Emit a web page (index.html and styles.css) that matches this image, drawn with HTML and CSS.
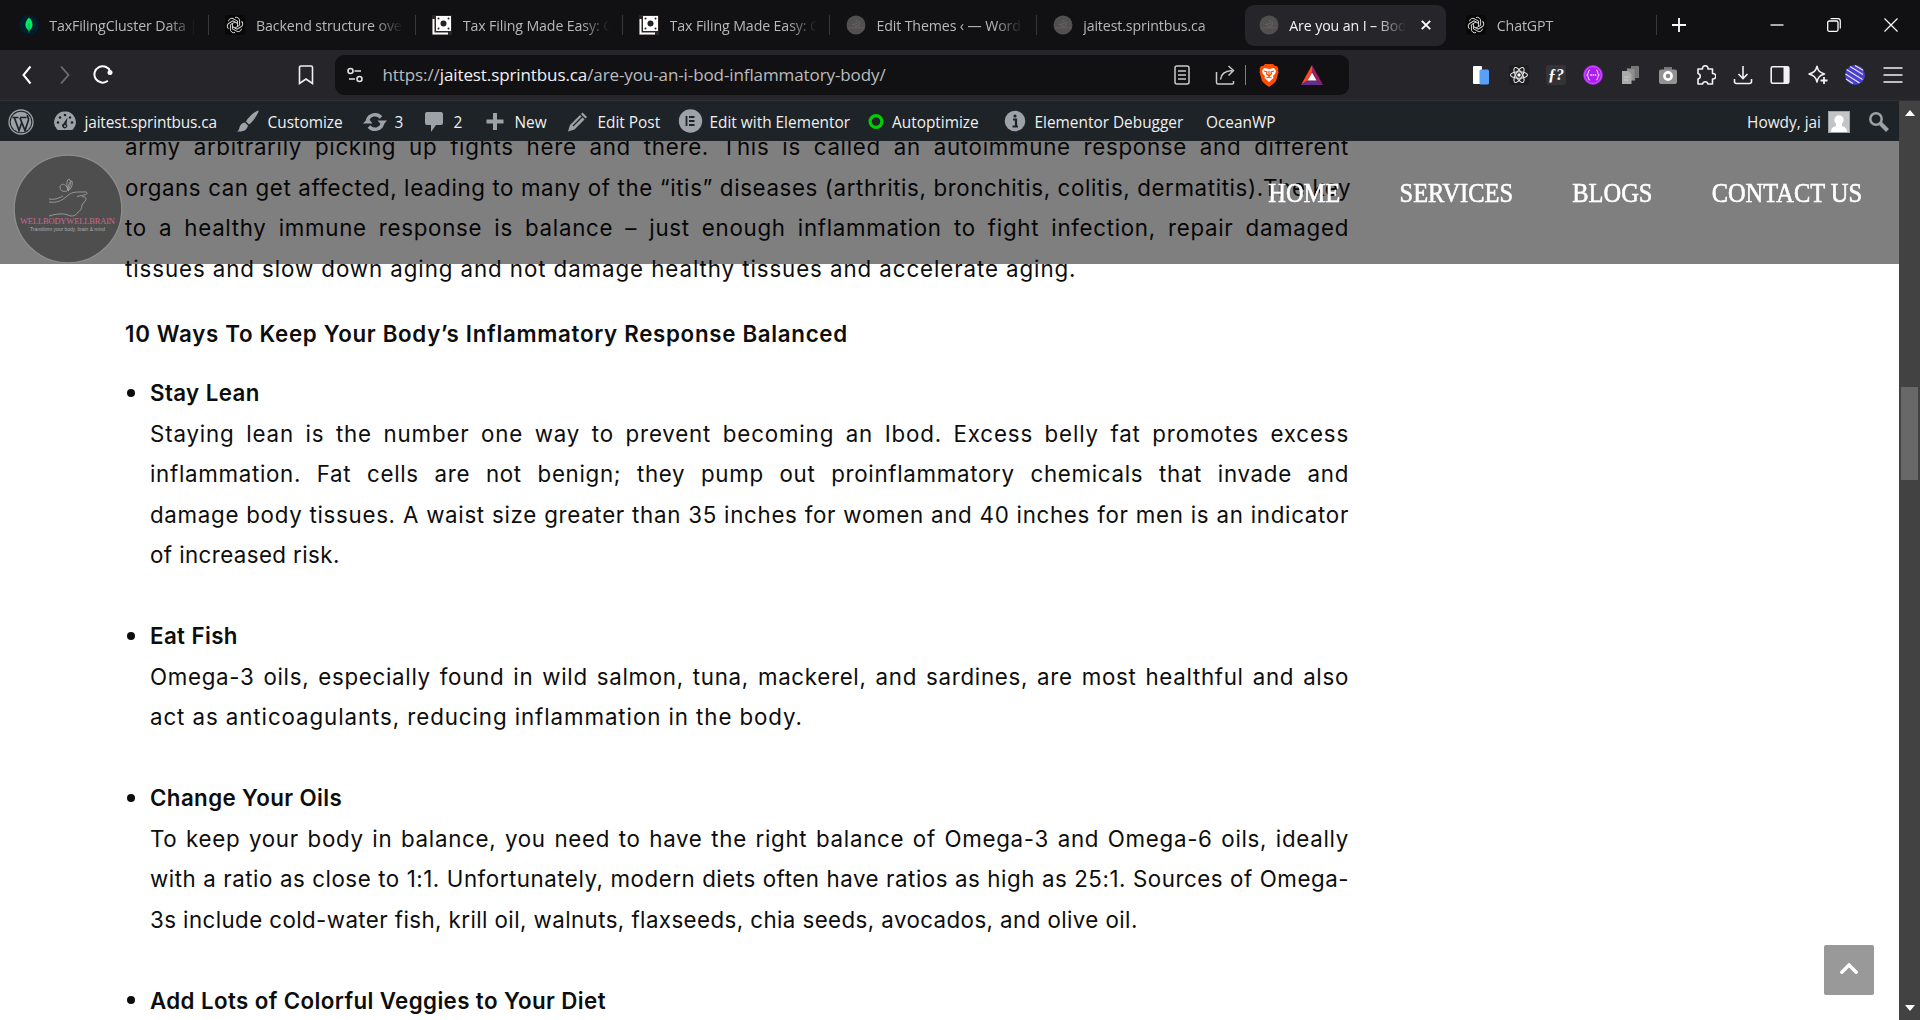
FILE: index.html
```html
<!DOCTYPE html>
<html lang="en">
<head>
<meta charset="utf-8">
<title>Are you an I – Bod?</title>
<link rel="stylesheet" href="styles.css">
</head>
<body>
<svg class="defs" aria-hidden="true">
  <symbol id="gpt" viewBox="0 0 20 20"><rect width="20" height="20" rx="3" fill="#080808"/><g fill="none" stroke="#d8d8d8" stroke-width="1"><g id="petal"><path d="M10 2.500a3.400 3.400 0 0 1 4.600 3.600v4.200L10 13"/></g><use href="#petal" transform="rotate(60 10 10)"/><use href="#petal" transform="rotate(120 10 10)"/><use href="#petal" transform="rotate(180 10 10)"/><use href="#petal" transform="rotate(240 10 10)"/><use href="#petal" transform="rotate(300 10 10)"/></g></symbol>
  <symbol id="money" viewBox="0 0 20 20"><rect width="20" height="20" fill="#2a2523"/><path d="M4 1h15v15H4z" fill="#fff"/><path d="M1.500 4v14.500H16" fill="none" stroke="#fff" stroke-width="2"/><circle cx="11.500" cy="8.500" r="3" fill="#222"/><g fill="#222"><circle cx="6.500" cy="3.500" r="1"/><circle cx="16.500" cy="3.500" r="1"/><circle cx="6.500" cy="13.500" r="1"/><circle cx="16.500" cy="13.500" r="1"/></g></symbol>
  <symbol id="well" viewBox="0 0 20 20"><circle cx="10" cy="10" r="9.500" fill="#505050"/><path d="M6 9.500l3-.5 3.500-1.500 1.500.5-1.500 3H8M10 6.500l.5-1.500 1 1" fill="none" stroke="#6c6c6c" stroke-width=".7"/><path d="M2 12.800h16" stroke="#75555c" stroke-width="1"/></symbol>
</svg>

<header class="tabs">
  <div class="tab"><svg class="fav" viewBox="0 0 20 20"><circle cx="10" cy="10" r="10" fill="#001e2b"/><path d="M10 2.500c5 5 4.500 10 0 13.500-4.500-3.500-5-8.500 0-13.500z" fill="#00ed64"/><path d="M10 8v9.500" stroke="#00a94a" stroke-width="1"/></svg><span class="tab-title">TaxFilingCluster Data |</span></div>
  <div class="tab"><svg class="fav"><use href="#gpt"/></svg><span class="tab-title">Backend structure over</span></div>
  <div class="tab"><svg class="fav"><use href="#money"/></svg><span class="tab-title">Tax Filing Made Easy: G</span></div>
  <div class="tab"><svg class="fav"><use href="#money"/></svg><span class="tab-title">Tax Filing Made Easy: G</span></div>
  <div class="tab"><svg class="fav"><use href="#well"/></svg><span class="tab-title">Edit Themes ‹ — Word</span></div>
  <div class="tab plain"><svg class="fav"><use href="#well"/></svg><span class="tab-title">jaitest.sprintbus.ca</span></div>
  <div class="tab active"><svg class="fav"><use href="#well"/></svg><span class="tab-title">Are you an I – Bod</span><svg class="tab-close" viewBox="0 0 10 10"><path d="M.8.8l8.400 8.400M9.200.8L.8 9.200" stroke="#fff" stroke-width="1.900"/></svg></div>
  <div class="tab"><svg class="fav"><use href="#gpt"/></svg><span class="tab-title">ChatGPT</span></div>
  <svg class="plus" viewBox="0 0 14 14"><path d="M7 0v14M0 7h14" stroke="#fff" stroke-width="1.800"/></svg>
  <div class="window">
    <svg viewBox="0 0 14 14"><path d="M.5 7h13" stroke="#fff" stroke-width="1.300"/></svg>
    <svg viewBox="0 0 14 14"><path d="M3.500.7H11a2.300 2.300 0 0 1 2.300 2.300v7.500" fill="none" stroke="#fff" stroke-width="1.200"/><rect x=".7" y="3" width="10.300" height="10.300" rx="1.500" fill="none" stroke="#fff" stroke-width="1.300"/></svg>
    <svg viewBox="0 0 14 14"><path d="M.5.5l13 13M13.500.5l-13 13" stroke="#fff" stroke-width="1.200"/></svg>
  </div>
</header>

<div class="toolbar">
  <div class="history">
    <svg viewBox="0 0 20 20"><path d="M13.500 1.500L6.500 10l7 8.500" stroke="#fff" stroke-width="2"/></svg>
    <svg viewBox="0 0 20 20"><path d="M6 1.500l7.500 8.500L6 18.500" stroke="#6f6e76" stroke-width="1.800"/></svg>
    <svg viewBox="0 0 20 20"><path d="M14.800 15.800A8.200 8.200 0 1 1 17.300 6.500" stroke="#fff" stroke-width="2"/><circle cx="17" cy="7.500" r="2.500" fill="#fff"/></svg>
  </div>
  <svg class="bookmark" viewBox="0 0 16 20"><path d="M1.500 2.500a1.500 1.500 0 0 1 1.500-1.500h10a1.500 1.500 0 0 1 1.500 1.500v16L8 14l-6.500 4.500z" fill="none" stroke="#f0f0f2" stroke-width="1.600"/></svg>
  <div class="address">
    <svg class="tune" viewBox="0 0 16 16"><g fill="none" stroke="#e2e2e4" stroke-width="1.600"><circle cx="3.500" cy="4" r="2.500"/><path d="M7.500 4H14M2 12h6"/><circle cx="12.500" cy="12" r="2.500"/></g></svg>
    <span class="url">https://<b>jaitest.sprintbus.ca</b>/are-you-an-i-bod-inflammatory-body/</span>
    <svg class="reader" viewBox="0 0 16 20"><rect x="1" y="1" width="14" height="18" rx="2"/><path d="M4 6h8M4 10h8M4 14h8"/></svg>
    <svg class="share" viewBox="0 0 20 20"><path d="M1.500 7v10.500a1.500 1.500 0 0 0 1.500 1.500h14.500a1 1 0 0 0 1-1v-2"/><path d="M5.500 14.500C6 9 9.500 6 17 5.500M13.500 1l5 4.500-5 5"/></svg>
    <i class="divider"></i>
    <svg class="brave" viewBox="0 0 20 23"><path d="M6 0h8l2 2h2l1.500 3-.5 1 .5 2-2.500 9-3 3-4 3-4-3-3-3L.5 8 1 6 .5 5 2 2h2z" fill="#ff4d00"/><path d="M5 4l5 1 5-1 2 3-1 3-2 2 .5 2L10 18l-4.500-4 .5-2-2-2-1-3z" fill="#fff"/><path d="M5 7l3 1-.5 2L10 12l2.500-2-.5-2 3-1M7.500 14l2.500-1 2.500 1M10 7v5" fill="none" stroke="#ff4d00" stroke-width="1.200"/></svg>
    <svg class="bat" viewBox="0 0 22 20"><path d="M11 0v7l-4.500 8.500L0 20z" fill="#ff4724"/><path d="M11 0l11 20-6.500-4.500L11 7z" fill="#9e1f63"/><path d="M0 20l6.500-4.500h9L22 20z" fill="#662d91"/><path d="M11 7.500l4.500 8h-9z" fill="#fff"/></svg>
  </div>
  <div class="extensions">
    <svg viewBox="0 0 20 20"><rect x="2" y="1" width="9" height="18" rx="1" fill="#fff"/><rect x="8.500" y="4.500" width="9.500" height="15" rx="1.500" fill="#58a0fa"/></svg>
    <svg viewBox="0 0 20 20"><rect width="20" height="20" rx="3" fill="#1e1e20"/><g fill="none" stroke="#e6e6e6" stroke-width="1.100"><ellipse cx="10" cy="10" rx="8.500" ry="3.300"/><ellipse cx="10" cy="10" rx="8.500" ry="3.300" transform="rotate(60 10 10)"/><ellipse cx="10" cy="10" rx="8.500" ry="3.300" transform="rotate(120 10 10)"/></g><circle cx="10" cy="10" r="1.700" fill="#fff"/></svg>
    <span class="ext-f">ƒ?</span>
    <svg viewBox="0 0 20 20"><circle cx="10" cy="10" r="9.900" fill="#ad1df0"/><circle cx="10" cy="10" r="8.400" fill="none" stroke="#d070f8" stroke-width=".8"/><path d="M7 5C4.500 5 6 9 4 10c2 1 .5 5 3 5M13 5c2.500 0 1 4 3 5-2 1-.5 5-3 5" fill="none" stroke="#ecc4fc" stroke-width="1.100"/><path d="M7.300 10h1.400M9.600 10H11M11.800 10h1.400" stroke="#fff" stroke-width="1.500"/></svg>
    <svg viewBox="0 0 20 20"><path d="M10 1h8v12h-8z" fill="#777"/><path d="M6 3.500h8v12H6z" fill="#8f8f8f" stroke="#666" stroke-width=".5"/><path d="M1 6h6l3.500 3v10H1z" fill="#aaa"/><path d="M3 12h5M3 15h4" stroke="#c8c8c8" stroke-width="1"/></svg>
    <svg viewBox="0 0 20 20"><path d="M6 2h8v4H6z" fill="#777"/><rect x="1" y="4.500" width="18" height="14.500" rx="2" fill="#929292"/><circle cx="10" cy="11" r="3.600" fill="#888" stroke="#fff" stroke-width="2.600"/></svg>
    <svg viewBox="0 0 20 20"><path d="M2 4h4.500a2.800 2.800 0 1 1 5.500 0h4.500v4.500a2.800 2.800 0 1 1 0 5.500v5H12a2.800 2.800 0 0 0-5.500 0H2v-5a2.800 2.800 0 0 0 0-5.500z" fill="none" stroke="#f2f2f4" stroke-width="1.600" stroke-linejoin="round"/></svg>
    <svg viewBox="0 0 20 20"><path d="M10 1v12M5.500 9l4.500 4.500L14.500 9M1.500 14v2.500a2 2 0 0 0 2 2h13a2 2 0 0 0 2-2V14" fill="none" stroke="#f2f2f4" stroke-width="1.600"/></svg>
    <svg viewBox="0 0 20 20"><rect x="1.200" y="1.800" width="17.600" height="16.400" rx="1.500" fill="none" stroke="#f2f2f4" stroke-width="1.600"/><path d="M13.500 2H19v16h-5.500z" fill="#f2f2f4"/></svg>
    <svg viewBox="0 0 20 20"><path d="M9 1.200c1 4.800 2.500 6.300 7.500 7.800-5 1.500-6.500 3-7.500 8-1.200-5-3-6.500-8-8 5-1.500 6.800-3 8-7.800z" fill="none" stroke="#f2f2f4" stroke-width="1.500" stroke-linejoin="round"/><path d="M16 12v7M12.500 15.500h7" stroke="#f2f2f4" stroke-width="1.800"/></svg>
    <svg viewBox="0 0 20 20"><circle cx="10" cy="10" r="10" fill="#4a3fcf"/><path d="M5 1.500l13 8M1.500 4.500l16 10M.5 9l14 9M1 14l7 4.500M10 .5l8 4.800" stroke="#e4e6f8" stroke-width="1.100"/></svg>
    <svg viewBox="0 0 20 20"><path d="M.5 3h19M.5 10h19M.5 17h19" stroke="#f2f2f4" stroke-width="1.700"/></svg>
  </div>
</div>

<div class="viewport">
  <div class="page">
    <nav class="adminbar">
      <a class="wp"><svg class="i26" viewBox="0 0 26 26"><circle cx="13" cy="13" r="12" fill="none" stroke="#9ca2a7" stroke-width="1.300"/><circle cx="13" cy="13" r="10.300" fill="#9ca2a7"/><path d="M4.500 8.500h6M12 8.500h6.500M6.500 9l4.500 12.500L14 13M12 9l5 12.500L20.500 11c.5-2-1.500-3-1-5" fill="none" stroke="#1d2327" stroke-width="1.700"/></svg></a>
      <a class="site"><svg class="i26" viewBox="0 0 26 26"><path d="M13 2.500a10.500 10.500 0 0 1 8.700 16.800c-.5.900-1 1.700-2 1.700H6.300c-1 0-1.500-.8-2-1.700A10.500 10.500 0 0 1 13 2.500z" fill="#9ca2a7"/><g fill="#1d2327"><circle cx="13" cy="6" r="1.300"/><circle cx="8" cy="8.500" r="1.300"/><circle cx="6" cy="13.500" r="1.300"/><circle cx="20" cy="13.500" r="1.300"/><circle cx="18" cy="8.500" r="1.200"/><path d="M15.500 8.500l-1 6.500a2.500 2.500 0 1 1-3-.5z"/></g><circle cx="13" cy="17" r="1" fill="#9ca2a7"/></svg>jaitest.sprintbus.ca</a>
      <a><svg class="i26" viewBox="0 0 26 26"><path d="M23.500 1.500c1 1-5.500 12-9.500 14l-3-3c2-4 11-12 12.500-11zM10 13.500l3 3c-1 5-5 6.500-11 6 2-.5 2-3 3-5.500 1-2 3-3.500 5-3.500z" fill="#9ca2a7"/></svg>Customize</a>
      <a><svg class="i26" viewBox="0 0 26 26"><path d="M5.500 11.500a7.800 7.800 0 0 1 13.500-3M20.500 14.500a7.800 7.800 0 0 1-13.500 3" fill="none" stroke="#9ca2a7" stroke-width="3.500"/><path d="M15.500 11.500H25L20.500 17zM1 14.500h9.500L6 9z" fill="#9ca2a7"/></svg>3</a>
      <a><svg class="i26" viewBox="0 0 26 26"><path d="M6 3h14a2 2 0 0 1 2 2v9a2 2 0 0 1-2 2h-5l-5 7v-7H6a2 2 0 0 1-2-2V5a2 2 0 0 1 2-2z" fill="#9ca2a7"/></svg>2</a>
      <a><svg class="i26" viewBox="0 0 26 26"><path d="M13 4v17M4.500 12.500h17" stroke="#9ca2a7" stroke-width="4"/></svg>New</a>
      <a><svg class="i26" viewBox="0 0 26 26"><path d="M17.500 3.500l4.500 4.500L9.500 20.500l-6.500 2 2-6.500z" fill="#9ca2a7"/><path d="M15 5l5.500 5.500M8 17L17.500 7.500" stroke="#1d2327" stroke-width="1.200"/></svg>Edit Post</a>
      <a><svg class="i26" viewBox="0 0 26 26"><circle cx="13.500" cy="12" r="11.700" fill="#9ca2a7"/><path d="M9.500 7v10M12 8h5.500M12 12h5.500M12 16h5.500" stroke="#1d2327" stroke-width="1.800"/></svg>Edit with Elementor</a>
      <a class="tight"><svg class="i26" viewBox="0 0 26 26"><circle cx="13" cy="12.500" r="5.900" fill="none" stroke="#00d000" stroke-width="3.200"/></svg>Autoptimize</a>
      <a><svg class="i26" viewBox="0 0 26 26"><circle cx="13" cy="12" r="10.300" fill="#9ca2a7"/><path d="M11 10.500h3V17M10.500 17.500h5.500" fill="none" stroke="#1d2327" stroke-width="2.200"/><circle cx="13" cy="7" r="1.600" fill="#1d2327"/></svg>Elementor Debugger</a>
      <a>OceanWP</a>
      <a class="account">Howdy, jai<svg class="avatar" viewBox="0 0 22 22"><rect x=".5" y=".5" width="21" height="21" fill="#c3c4c7" stroke="#9ca2a7"/><circle cx="11" cy="9" r="4.700" fill="#fff"/><path d="M3 21c.3-4 2-5 5-6V12h6v3c3 1 4.700 2 5 6z" fill="#fff"/></svg><svg class="search" viewBox="0 0 20 20"><circle cx="7" cy="7" r="5.700" fill="none" stroke="#9ca2a7" stroke-width="2.500"/><path d="M11.500 11.500l7 7" stroke="#9ca2a7" stroke-width="4"/></svg></a>
    </nav>

    <main class="content">
      <div class="site-header">
        <svg class="logo" viewBox="0 0 110 110"><circle cx="55" cy="55" r="53.800" fill="#4e4e4e" stroke="#8d8d8d" stroke-width="1.300"/><g fill="none" stroke="#a9a9a9" stroke-width=".8"><path d="M36 48c8 1 12-1 17-5 5-5 9-5 15-5h3c4-1 4 3 0 3l-7 1.500M69 43c4-1 5 2 3 4l-3 4c0 4-2 6-4 7-2 4-6 5-10 3-6-2-12-1-19 1M36 45c6 1 10-1 14-3"/><path d="M54 37c-4 1-7 0-7-4 1-4 6-4 8 3-2-5-1-11 1-11 3 2 1 8-1 12M55 37c0-6 2-10 4-10 1 4-1 8-4 10"/></g><text x="7" y="70" class="logo-name" textLength="95">WELLBODYWELLBRAIN</text><text x="17" y="77" class="logo-tag" textLength="75">Transform your body, brain &amp; mind</text></svg>
        <nav class="menu"><a>HOME</a><a>SERVICES</a><a>BLOGS</a><a>CONTACT US</a></nav>
      </div>

      <article>
        <p>
          <span class="ln">army arbitrarily picking up fights here and there. This is called an autoimmune response and different</span>
          <span class="ln snug">organs can get affected, leading to many of the “itis” diseases (arthritis, bronchitis, colitis, dermatitis).The key</span>
          <span class="ln">to a healthy immune response is balance – just enough inflammation to fight infection, repair damaged</span>
          <span class="end wide">tissues and slow down aging and not damage healthy tissues and accelerate aging.</span>
        </p>
        <h2>10 Ways To Keep Your Body’s Inflammatory Response Balanced</h2>
        <ul>
          <li><h3>Stay Lean</h3>
            <span class="ln loose">Staying lean is the number one way to prevent becoming an Ibod. Excess belly fat promotes excess</span>
            <span class="ln">inflammation. Fat cells are not benign; they pump out proinflammatory chemicals that invade and</span>
            <span class="ln">damage body tissues. A waist size greater than 35 inches for women and 40 inches for men is an indicator</span>
            <span class="end narrow">of increased risk.</span></li>
          <li><h3>Eat Fish</h3>
            <span class="ln">Omega-3 oils, especially found in wild salmon, tuna, mackerel, and sardines, are most healthful and also</span>
            <span class="end wide">act as anticoagulants, reducing inflammation in the body.</span></li>
          <li><h3>Change Your Oils</h3>
            <span class="ln">To keep your body in balance, you need to have the right balance of Omega-3 and Omega-6 oils, ideally</span>
            <span class="ln tighter">with a ratio as close to 1:1. Unfortunately, modern diets often have ratios as high as 25:1. Sources of Omega-</span>
            <span class="end narrow">3s include cold-water fish, krill oil, walnuts, flaxseeds, chia seeds, avocados, and olive oil.</span></li>
          <li><h3>Add Lots of Colorful Veggies to Your Diet</h3></li>
        </ul>
      </article>
      <a class="to-top"><svg viewBox="0 0 18 11"><path d="M1.800 9.200L9 2l7.200 7.200" fill="none" stroke="#fff" stroke-width="3.400" stroke-linecap="round"/></svg></a>
    </main>
  </div>
  <div class="scrollbar">
    <svg viewBox="0 0 10 6"><path d="M5 0l5 6H0z" fill="#fff"/></svg>
    <div class="track"><div class="thumb"></div></div>
    <svg viewBox="0 0 10 6"><path d="M0 0h10L5 6z" fill="#fff"/></svg>
  </div>
</div>
</body>
</html>
```
FILE: styles.css
```css
* { box-sizing: border-box; }
body { margin: 0; width: 1920px; height: 1020px; overflow: hidden; display: flex; flex-direction: column; font-family: "Open Sans", sans-serif; background: #fff; }
svg { display: block; flex: none; }
.defs { position: absolute; width: 0; height: 0; }

/* Tab strip */
.tabs { height: 50px; flex: none; background: #111113; display: flex; align-items: center; padding-left: 2.700px; font-size: 14.200px; letter-spacing: -.12px; color: #b9b9bc; }
.tab { width: 206.800px; height: 41px; flex: none; display: flex; align-items: center; padding-left: 16px; border-radius: 9px; background: linear-gradient(#39393c, #39393c) right center / 1px 20px no-repeat; }
.fav { width: 20px; height: 20px; }
.tab-title { width: 147px; margin-left: 10.500px; white-space: nowrap; overflow: hidden; -webkit-mask-image: linear-gradient(90deg, #000 118px, transparent 147px); mask-image: linear-gradient(90deg, #000 118px, transparent 147px); }
.tab.plain { background: none; }
.tab.active { width: 201px; margin: 0 4px 0 1.800px; padding-left: 14px; background: #26252a; color: #f3f3f4; }
.tab.active .tab-title { width: 117px; margin-left: 10px; -webkit-mask-image: linear-gradient(90deg, #000 86px, transparent 117px); mask-image: linear-gradient(90deg, #000 86px, transparent 117px); }
.tab-close { width: 10px; height: 10px; margin-left: 15px; }
.plus { width: 14px; height: 14px; margin-left: 14.500px; }
.window { margin-left: auto; display: flex; gap: 43px; padding-right: 22px; }
.window svg { width: 14px; height: 14px; }

/* Toolbar */
.toolbar { height: 51px; flex: none; background: #26252a; border-bottom: 1px solid #302f34; display: flex; align-items: center; }
.history { display: flex; gap: 18px; padding-left: 17px; width: 298px; }
.history svg { width: 20px; height: 20px; fill: none; }
.bookmark { width: 16px; height: 20px; }
.address { width: 1014px; height: 40px; margin-left: 21px; border-radius: 9px; background: #111113; display: flex; align-items: center; padding-left: 12px; }
.tune { width: 16px; height: 16px; }
.url { width: 791px; margin-left: 19.500px; padding-bottom: 1.500px; font-size: 17px; letter-spacing: -.1px; color: #bcbcbf; white-space: nowrap; }
.url b { font-weight: 400; color: #f2f2f3; }
.reader { width: 16px; height: 20px; }
.share { width: 20px; height: 20px; margin-left: 25px; }
.reader, .share { fill: none; stroke: #c9c9cc; stroke-width: 1.500; }
.divider { width: 1px; height: 20px; margin-left: 10px; background: #7d7d80; }
.brave { width: 20px; height: 23px; margin-left: 13px; }
.bat { width: 22px; height: 20px; margin-left: 22px; }
.extensions { margin-left: auto; padding-right: 17.500px; display: flex; gap: 17.400px; }
.extensions svg, .ext-f { width: 20px; height: 20px; }
.ext-f { background: #343436; border-radius: 3px; color: #fff; font: italic 700 16px/20px "Liberation Serif", serif; text-align: center; }

/* Browser viewport */
.viewport { flex: 1; display: flex; min-height: 0; }
.page { width: 1899px; display: flex; flex-direction: column; }
.scrollbar { width: 21px; background: #424242; display: flex; flex-direction: column; align-items: center; padding: 9px 0; }
.scrollbar svg { width: 10px; height: 6px; }
.track { flex: 1; width: 17px; padding-top: 271px; }
.thumb { height: 93px; background: #686868; }

/* WordPress admin bar */
.adminbar { height: 40px; flex: none; background: #1d2327; color: #f0f0f1; font-size: 15.400px; display: grid; grid-template-columns: 52px 183px 127px 59px 61px 83px 112px 186px 139px 204px 119px 1fr; }
.adminbar a { display: flex; align-items: center; gap: 6.500px; white-space: nowrap; padding-top: 2px; }
.adminbar .wp { padding-left: 8px; }
.adminbar .site { letter-spacing: -.15px; }
.adminbar .tight { gap: 3px; }
.i26 { width: 26px; height: 26px; }
.account { justify-content: flex-end; padding-right: 10px; }
.avatar { width: 22px; height: 22px; }
.search { width: 20px; height: 20px; margin-left: 13px; }

/* Site */
.content { flex: 1; min-height: 0; position: relative; overflow: hidden; background: #fff; }
.site-header { position: absolute; z-index: 1; inset: 0 0 auto 0; height: 123px; background: rgba(0, 0, 0, .5); display: flex; justify-content: space-between; padding: 12.500px 37px 0 13px; }
.logo { width: 110px; height: 110px; }
.logo-name { font: 8.500px "Liberation Serif", serif; fill: #c66a8c; }
.logo-tag { font: 5px "Liberation Sans", sans-serif; fill: #aaa; }
/* Condensed display face: the whole menu is narrowed from its right edge */
.menu { display: flex; gap: 65.500px; padding-top: 24.500px; font: 27px/30px "Liberation Serif", serif; color: #fff; -webkit-text-stroke: .6px #fff; transform: scaleX(.905); transform-origin: right center; }

/* Article */
article { width: 1224px; margin: -14px 0 0 125px; font: 400 22.300px/40.500px Inter, sans-serif; letter-spacing: .7px; color: #0d0d0d; }
p, h2, h3, ul { margin: 0; font-size: inherit; }
.ln, .end { display: block; white-space: nowrap; }
.ln { text-align: justify; text-align-last: justify; }
.snug { letter-spacing: .62px; }
.tighter { letter-spacing: .54px; }
.loose { letter-spacing: .85px; }
.wide { letter-spacing: .92px; }
.narrow { letter-spacing: .42px; }
h2, h3 { font-weight: 600; }
h2 { margin: 24.500px 0 19px; }
h3 { letter-spacing: .4px; }
ul { padding: 0 0 0 25px; list-style: none; }
li { margin-bottom: 40.500px; }
h3::before { content: ""; float: left; width: 8px; height: 8px; margin: 15.500px 0 0 -23px; border-radius: 50%; background: #0d0d0d; }

.to-top { position: absolute; right: 25px; bottom: 25px; width: 50px; height: 50px; border-radius: 2px; background: #999; display: flex; align-items: center; justify-content: center; padding-bottom: 4px; }
.to-top svg { width: 18px; height: 11px; }
```
